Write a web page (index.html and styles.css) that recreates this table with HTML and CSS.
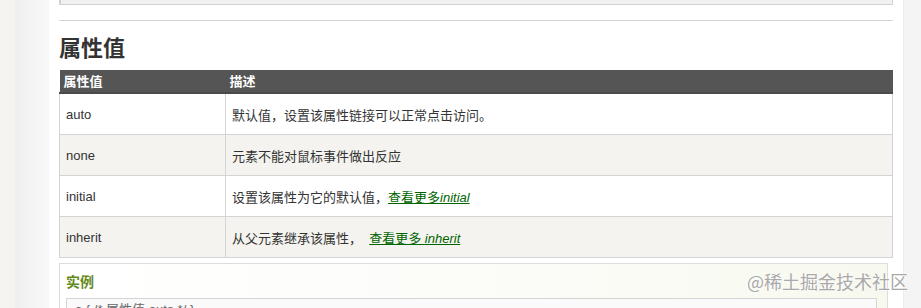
FILE: index.html
```html
<!DOCTYPE html>
<html lang="zh-CN">
<head>
<meta charset="utf-8">
<title>属性值</title>
<link rel="stylesheet" href="styles.css">
</head>
<body>
<div class="page">
  <div class="side-a"></div>
  <div class="side-b"></div>
  <main class="main">
    <div class="prev-box"></div>
    <hr class="rule">
    <h2 class="title">属性值</h2>
    <table class="ref">
      <thead>
        <tr><th class="col-val">属性值</th><th>描述</th></tr>
      </thead>
      <tbody>
        <tr><td>auto</td><td>默认值，设置该属性链接可以正常点击访问。</td></tr>
        <tr><td>none</td><td>元素不能对鼠标事件做出反应</td></tr>
        <tr><td>initial</td><td>设置该属性为它的默认值，<a class="more" href="#">查看更多<i>initial</i></a></td></tr>
        <tr><td>inherit</td><td>从父元素继承该属性，&nbsp; <a class="more" href="#">查看更多 <i>inherit</i></a></td></tr>
      </tbody>
    </table>
    <div class="example">
      <h3 class="example-title">实例</h3>
      <div class="code">a { /* 属性值 auto */ }</div>
    </div>
  </main>
  <div class="rail"></div>
</div>
<div class="watermark">@稀土掘金技术社区</div>
</body>
</html>
```
FILE: styles.css
```css
html, body {
  margin: 0;
  padding: 0;
  height: 100%;
  overflow: hidden;
}
body {
  background: #fff;
  font-family: "Liberation Sans", "Noto Sans CJK SC", sans-serif;
  color: #333;
  font-size: 13px;
}
.page {
  display: flex;
  min-height: 100%;
}
.side-a {
  width: 15px;
  flex: none;
  background: #f5f4f1;
}
.side-b {
  width: 34px;
  flex: none;
  background: linear-gradient(to right, #efefef, #f3f3f3 40%, #f8f8f8);
}
.main {
  flex: 1;
  padding: 0 10px;
  min-width: 0;
}
.rail {
  width: 17px;
  flex: none;
  background: #f4f4f4;
  border-left: 1px solid #ececec;
}
.prev-box {
  height: 4px;
  background: #f1f1f1;
  border: 1px solid #d2d2d2;
  border-top: none;
  border-left-width: 2px;
}
.rule {
  margin: 15px 0 0;
  border: none;
  border-top: 1px solid #d6d6d6;
  height: 0;
}
.title {
  margin: 10px 0 9px;
  font-family: "Noto Sans CJK SC", sans-serif;
  font-size: 22px;
  line-height: 30px;
  font-weight: bold;
  color: #333;
}
.ref {
  width: 100%;
  border-collapse: collapse;
}
.ref th {
  background: #555;
  color: #fff;
  text-align: left;
  font-family: "Noto Sans CJK SC", sans-serif;
  font-size: 13px;
  font-weight: bold;
  height: 22px;
  line-height: 22px;
  padding: 0 4px;
  border-bottom: 2px solid #4a4a4a;
}
.ref th.col-val {
  width: 158px;
}
.ref td {
  border: 1px solid #d4d4d4;
  height: 40px;
  padding: 0 6px;
  font-size: 13px;
  color: #333;
  vertical-align: middle;
}
.ref tbody tr:nth-child(even) td {
  background: #f4f3ef;
}
.more {
  color: #006400;
  text-decoration: underline;
}
.example {
  margin: 5px 5px 0 0;
  border: 1px solid #ddd;
  background: linear-gradient(to right, #ffffff, #fbfcf7 60%, #f7f9ee);
  padding: 8px 10px 10px 6px;
}
.example-title {
  margin: 0 0 8px;
  font-family: "Noto Sans CJK SC", sans-serif;
  font-size: 14px;
  line-height: 18px;
  font-weight: bold;
  color: #648a1c;
}
.code {
  border: 1px solid #d4d4d4;
  background: #fafafa;
  padding: 2px 8px 6px;
  font-size: 13px;
  line-height: 18px;
  color: #666;
}
.watermark {
  position: absolute;
  top: 269px;
  right: 13px;
  font-family: "Noto Sans CJK SC", sans-serif;
  font-size: 18px;
  line-height: 24px;
  color: #a9a9a9;
  text-shadow: 0 0 2px #fff, 0 0 2px #fff;
}
```
